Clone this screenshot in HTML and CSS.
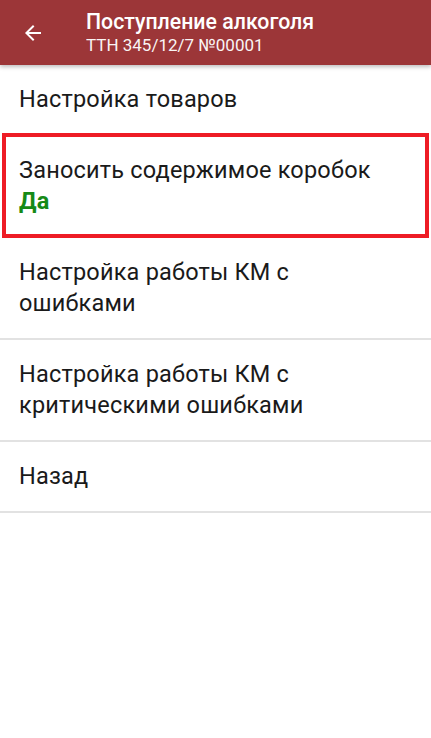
FILE: index.html
```html
<!DOCTYPE html>
<html lang="ru">
<head>
    <meta charset="UTF-8">
    <meta name="viewport" content="width=device-width, initial-scale=1.0">
    <title>Поступление алкоголя</title>
    <link rel="stylesheet" href="styles.css">
</head>
<body>
    <header class="toolbar">
        <button class="back" aria-label="Назад">
            <svg width="24" height="24" viewBox="0 0 24 24">
                <path d="M20 11H7.83l5.59-5.59L12 4l-8 8 8 8 1.41-1.41L7.83 13H20v-2z" fill="#fff"/>
            </svg>
        </button>
        <div class="titles">
            <div class="title">Поступление алкоголя</div>
            <div class="subtitle">ТТН 345/12/7 №00001</div>
        </div>
    </header>

    <ul class="menu">
        <li class="item first">Настройка товаров</li>
        <li class="item selected">
            Заносить содержимое коробок
            <span class="value">Да</span>
        </li>
        <li class="item">Настройка работы КМ с<br>ошибками</li>
        <li class="item">Настройка работы КМ с<br>критическими ошибками</li>
        <li class="item">Назад</li>
    </ul>
</body>
</html>
```

FILE: styles.css
```css
body {
    margin: 0;
    font-family: Roboto, "Noto Sans", sans-serif;
    background: #fff;
    color: #1a1a1a;
}
.toolbar {
    display: flex;
    align-items: center;
    height: 65px;
    background-color: #9c3638;
    color: #fff;
    box-shadow: 0 2px 4px rgba(0,0,0,0.25);
    position: relative;
}
.back {
    width: 66px;
    height: 65px;
    padding: 0 0 0 21px;
    border: none;
    background: none;
    display: flex;
    align-items: center;
}
.titles {
    padding-left: 20px;
    padding-bottom: 2px;
}
.title {
    font-size: 21.3px;
    font-weight: 500;
    line-height: 26px;
}
.subtitle {
    font-size: 17px;
    line-height: 20px;
    opacity: 0.95;
}
.menu {
    list-style: none;
    margin: 0;
    padding: 0;
}
.item {
    font-size: 23.5px;
    letter-spacing: 0.2px;
    line-height: 31px;
    padding: 19px 19px 19px 19px;
    border-bottom: 2px solid #e2e2e2;
}
.item.first {
    padding: 19px 19px 18px 19px;
    border-bottom: none;
}
.item.selected {
    margin: 0 2px;
    border: 4px solid #ee1c25;
    padding: 18px 13px 17px 13px;
}
.value {
    display: block;
    color: #168a16;
    font-weight: 700;
}
```
